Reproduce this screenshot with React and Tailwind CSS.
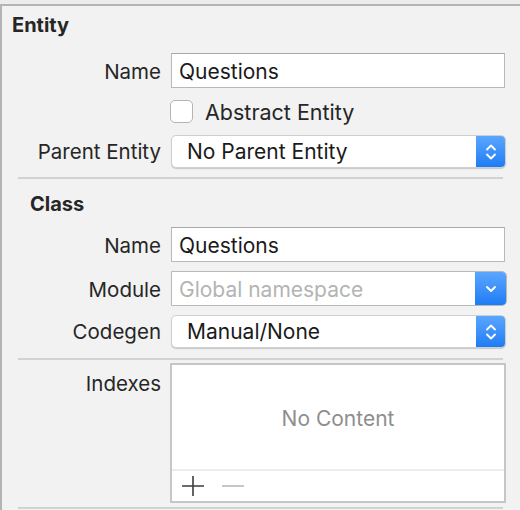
import * as React from "react";

// stepper arrows used by the blue popup buttons
function Stepper() {
	return (
		<svg width="14" height="22" viewBox="0 0 14 22" fill="none">
			<path d="M3 8.5 L7 4.5 L11 8.5" stroke="white" strokeWidth="1.8" strokeLinecap="round" strokeLinejoin="round" />
			<path d="M3 13.5 L7 17.5 L11 13.5" stroke="white" strokeWidth="1.8" strokeLinecap="round" strokeLinejoin="round" />
		</svg>
	);
}

function Chevron() {
	return (
		<svg width="14" height="10" viewBox="0 0 14 10" fill="none">
			<path d="M3 3 L7 7 L11 3" stroke="white" strokeWidth="1.9" strokeLinecap="round" strokeLinejoin="round" />
		</svg>
	);
}

function Label({ children, className = "" }) {
	return (
		<div className={`w-[159px] shrink-0 whitespace-nowrap text-right text-[20.5px] text-[#262626] ${className}`}>
			{children}
		</div>
	);
}

function TextField({ value, className = "" }) {
	return (
		<div
			className={`ml-[10px] flex w-[334px] items-center border border-[#b8b8b8] border-t-[#a9a9a9] bg-white pl-[7px] pt-[2px] text-[21px] text-[#1a1a1a] ${className}`}
		>
			{value}
		</div>
	);
}

function Popup({ value, className = "" }) {
	return (
		<div
			className={`ml-[10px] flex overflow-hidden rounded-[5px] border border-[#cfcfcf] bg-white shadow-[0_1px_1px_rgba(0,0,0,0.18)] ${className}`}
		>
			<div className="flex flex-1 items-center pl-[15px] pt-[1px] text-[21px] text-[#1a1a1a]">{value}</div>
			<div className="flex w-[29px] items-center justify-center bg-gradient-to-b from-[#5aa6ff] to-[#1c7cf4]">
				<Stepper />
			</div>
		</div>
	);
}

export default function App() {
	return (
		<div
			className="h-[510px] w-[520px] overflow-hidden bg-[#ececec] pt-[4px] text-[20px] leading-[24px]"
			style={{ fontFamily: "Inter, 'Noto Sans', sans-serif" }}
		>
			<div className="h-full border-l-2 border-t-2 border-[#b4b4b4] bg-[#f2f2f2]">
				{/* Entity section */}
				<div className="pl-[10px] pt-[7px] font-bold text-[#262626]">Entity</div>

				<div className="mt-[16px] flex h-[35px] items-center">
					<Label className="pt-[2px]">Name</Label>
					<TextField value="Questions" className="h-[35px]" />
				</div>

				<div className="mt-[12px] flex h-[23px] items-center">
					<div className="ml-[168px] h-[23px] w-[23px] rounded-[5px] border border-[#b4b4b4] bg-white" />
					<div className="ml-[12px] text-[21.5px] text-[#262626]">Abstract Entity</div>
				</div>

				<div className="mt-[12px] flex h-[33px] items-center">
					<Label>Parent Entity</Label>
					<Popup value="No Parent Entity" className="h-[33px] w-[335px]" />
				</div>

				<div className="ml-[16px] mt-[9px] h-[2px] w-[485px] bg-[#d2d2d2]" />

				{/* Class section */}
				<div className="pl-[28px] pt-[13px] font-bold text-[#262626]">Class</div>

				<div className="mt-[11px] flex h-[35px] items-center">
					<Label className="pt-[2px]">Name</Label>
					<TextField value="Questions" className="h-[35px]" />
				</div>

				<div className="mt-[9px] flex h-[35px] items-center">
					<Label className="pt-[2px]">Module</Label>
					<div className="ml-[10px] flex h-[35px] w-[336px] overflow-hidden rounded-r-[5px] border border-[#b8b8b8] bg-white">
						<div className="flex flex-1 items-center pl-[7px] pt-[2px] text-[21px] text-[#b4b4b4]">Global namespace</div>
						<div className="flex w-[31px] items-center justify-center bg-gradient-to-b from-[#5aa6ff] to-[#1c7cf4]">
							<Chevron />
						</div>
					</div>
				</div>

				<div className="mt-[9px] flex h-[33px] items-center">
					<Label>Codegen</Label>
					<Popup value="Manual/None" className="h-[33px] w-[335px]" />
				</div>

				<div className="ml-[16px] mt-[10px] h-[2px] w-[485px] bg-[#d2d2d2]" />

				{/* Indexes */}
				<div className="mt-[3px] flex">
					<Label className="pt-[9px]">Indexes</Label>
					<div className="ml-[9px] flex h-[140px] w-[336px] flex-col border-2 border-[#c6c6c6] bg-white">
						<div className="flex flex-1 items-center justify-center pt-[4px] text-[21px] text-[#8e8e8e]">
							No Content
						</div>
						<div className="flex h-[32px] items-center border-t-2 border-[#ececec] pl-[9px]">
							<svg width="24" height="24" viewBox="0 0 24 24">
								<path d="M12 2 V22 M1 12 H23" stroke="#3c3c3c" strokeWidth="1.6" />
							</svg>
							<svg className="ml-[16px]" width="24" height="24" viewBox="0 0 24 24">
								<path d="M1 12 H23" stroke="#b8b8b8" strokeWidth="1.6" />
							</svg>
						</div>
					</div>
				</div>

				<div className="ml-[16px] mt-[4px] h-[2px] w-[485px] bg-[#d2d2d2]" />
			</div>
		</div>
	);
}
